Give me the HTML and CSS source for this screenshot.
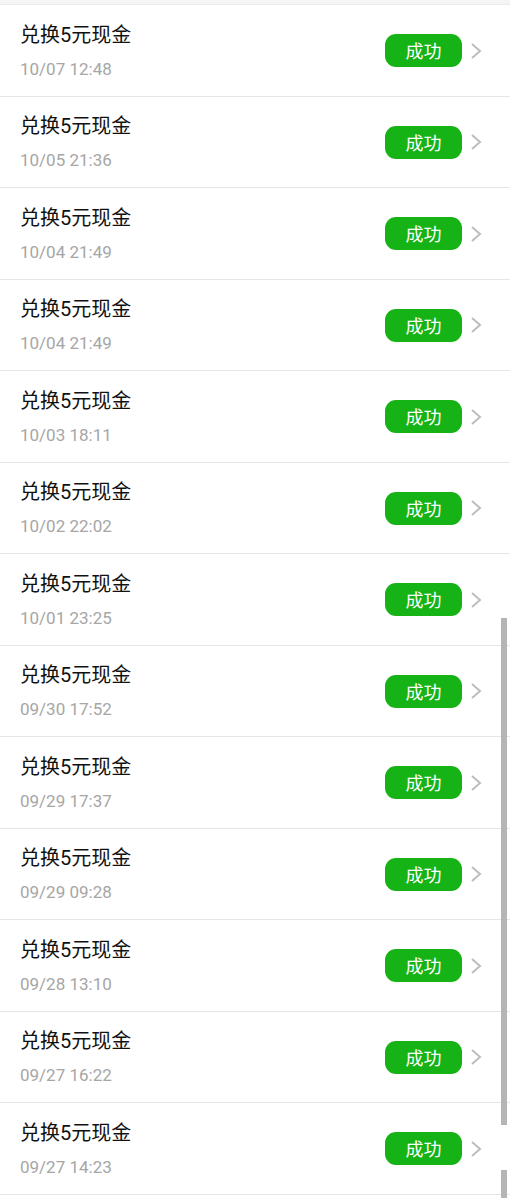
FILE: index.html
```html
<!DOCTYPE html>
<html lang="zh">
<head>
<meta charset="utf-8">
<link rel="stylesheet" href="styles.css">
</head>
<body>
<div class="topbar"></div>
<ul class="list">
  <li class="row"><div class="info"><div class="title">兑换5元现金</div><div class="time">10/07 12:48</div></div><span class="badge">成功</span><svg class="chev" viewBox="0 0 12 18"><path d="M2 2 L10 9 L2 16" /></svg></li>
  <li class="row"><div class="info"><div class="title">兑换5元现金</div><div class="time">10/05 21:36</div></div><span class="badge">成功</span><svg class="chev" viewBox="0 0 12 18"><path d="M2 2 L10 9 L2 16" /></svg></li>
  <li class="row"><div class="info"><div class="title">兑换5元现金</div><div class="time">10/04 21:49</div></div><span class="badge">成功</span><svg class="chev" viewBox="0 0 12 18"><path d="M2 2 L10 9 L2 16" /></svg></li>
  <li class="row"><div class="info"><div class="title">兑换5元现金</div><div class="time">10/04 21:49</div></div><span class="badge">成功</span><svg class="chev" viewBox="0 0 12 18"><path d="M2 2 L10 9 L2 16" /></svg></li>
  <li class="row"><div class="info"><div class="title">兑换5元现金</div><div class="time">10/03 18:11</div></div><span class="badge">成功</span><svg class="chev" viewBox="0 0 12 18"><path d="M2 2 L10 9 L2 16" /></svg></li>
  <li class="row"><div class="info"><div class="title">兑换5元现金</div><div class="time">10/02 22:02</div></div><span class="badge">成功</span><svg class="chev" viewBox="0 0 12 18"><path d="M2 2 L10 9 L2 16" /></svg></li>
  <li class="row"><div class="info"><div class="title">兑换5元现金</div><div class="time">10/01 23:25</div></div><span class="badge">成功</span><svg class="chev" viewBox="0 0 12 18"><path d="M2 2 L10 9 L2 16" /></svg></li>
  <li class="row"><div class="info"><div class="title">兑换5元现金</div><div class="time">09/30 17:52</div></div><span class="badge">成功</span><svg class="chev" viewBox="0 0 12 18"><path d="M2 2 L10 9 L2 16" /></svg></li>
  <li class="row"><div class="info"><div class="title">兑换5元现金</div><div class="time">09/29 17:37</div></div><span class="badge">成功</span><svg class="chev" viewBox="0 0 12 18"><path d="M2 2 L10 9 L2 16" /></svg></li>
  <li class="row"><div class="info"><div class="title">兑换5元现金</div><div class="time">09/29 09:28</div></div><span class="badge">成功</span><svg class="chev" viewBox="0 0 12 18"><path d="M2 2 L10 9 L2 16" /></svg></li>
  <li class="row"><div class="info"><div class="title">兑换5元现金</div><div class="time">09/28 13:10</div></div><span class="badge">成功</span><svg class="chev" viewBox="0 0 12 18"><path d="M2 2 L10 9 L2 16" /></svg></li>
  <li class="row"><div class="info"><div class="title">兑换5元现金</div><div class="time">09/27 16:22</div></div><span class="badge">成功</span><svg class="chev" viewBox="0 0 12 18"><path d="M2 2 L10 9 L2 16" /></svg></li>
  <li class="row"><div class="info"><div class="title">兑换5元现金</div><div class="time">09/27 14:23</div></div><span class="badge">成功</span><svg class="chev" viewBox="0 0 12 18"><path d="M2 2 L10 9 L2 16" /></svg></li>
</ul>
<div class="scroll scroll-a"></div>
<div class="scroll scroll-b"></div>
</body>
</html>
```

FILE: styles.css
```css
html, body {
  margin: 0;
  padding: 0;
  background: #ffffff;
  overflow: hidden;
}
body {
  font-family: Roboto, "Noto Sans CJK SC", sans-serif;
  width: 510px;
  height: 1198px;
  position: relative;
}
.topbar {
  height: 4px;
  background: #f5f5f5;
  border-bottom: 1px solid #ececec;
}
.list {
  list-style: none;
  margin: 0;
  padding: 0;
}
.row {
  box-sizing: border-box;
  height: 91.5px;
  border-bottom: 1px solid #e6e6e6;
  display: flex;
  align-items: center;
  padding: 1px 28px 0 20px;
}
.info {
  flex: 1;
  display: flex;
  flex-direction: column;
  gap: 10px;
  margin-top: 0;
}
.title {
  font-size: 20px;
  line-height: 26px;
  color: #111111;
}
.time {
  font-size: 17px;
  line-height: 22px;
  color: #a6a6a6;
}
.badge {
  width: 77px;
  height: 33px;
  border-radius: 11px;
  background: #16b316;
  color: #ffffff;
  font-size: 18px;
  line-height: 33px;
  text-align: center;
  font-family: "Noto Sans CJK SC", sans-serif;
}
.chev {
  width: 12px;
  height: 18px;
  margin-left: 8px;
  fill: none;
  stroke: #bdbdbd;
  stroke-width: 2;
}
.scroll {
  position: absolute;
  left: 501px;
  width: 6px;
  background: #b5b5b5;
}
.scroll-a {
  top: 618px;
  height: 507px;
}
.scroll-b {
  top: 1170px;
  height: 28px;
}
```
